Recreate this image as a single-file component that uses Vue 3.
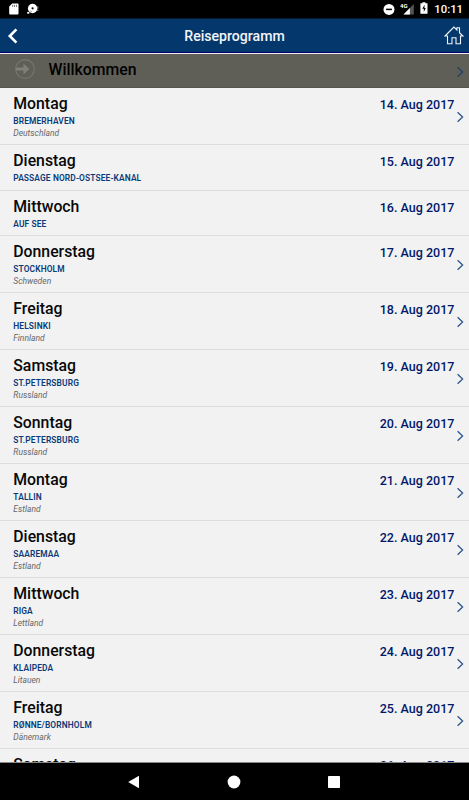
<script setup>
const tage = [
  { tag: 'Montag', ort: 'BREMERHAVEN', land: 'Deutschland', datum: '14. Aug 2017' },
  { tag: 'Dienstag', ort: 'PASSAGE NORD-OSTSEE-KANAL', datum: '15. Aug 2017' },
  { tag: 'Mittwoch', ort: 'AUF SEE', datum: '16. Aug 2017' },
  { tag: 'Donnerstag', ort: 'STOCKHOLM', land: 'Schweden', datum: '17. Aug 2017' },
  { tag: 'Freitag', ort: 'HELSINKI', land: 'Finnland', datum: '18. Aug 2017' },
  { tag: 'Samstag', ort: 'ST.PETERSBURG', land: 'Russland', datum: '19. Aug 2017' },
  { tag: 'Sonntag', ort: 'ST.PETERSBURG', land: 'Russland', datum: '20. Aug 2017' },
  { tag: 'Montag', ort: 'TALLIN', land: 'Estland', datum: '21. Aug 2017' },
  { tag: 'Dienstag', ort: 'SAAREMAA', land: 'Estland', datum: '22. Aug 2017' },
  { tag: 'Mittwoch', ort: 'RIGA', land: 'Lettland', datum: '23. Aug 2017' },
  { tag: 'Donnerstag', ort: 'KLAIPEDA', land: 'Litauen', datum: '24. Aug 2017' },
  { tag: 'Freitag', ort: 'RØNNE/BORNHOLM', land: 'Dänemark', datum: '25. Aug 2017' },
  { tag: 'Samstag', datum: '26. Aug 2017' },
]
</script>

<template>
  <div class="screen">
    <div class="statusbar">
      <svg class="sd" width="10" height="12" viewBox="0 0 10 12">
        <path d="M3.2 0.5H8.6Q9.5 0.5 9.5 1.4V10.6Q9.5 11.5 8.6 11.5H1.1Q0.2 11.5 0.2 10.6V3.6Z" fill="#fff" />
        <path d="M3.7 1.8V4M5.6 1.8V4M7.5 1.8V4" stroke="#555" stroke-width="0.8" />
      </svg>
      <svg class="sync" width="13" height="12" viewBox="0 0 13 12">
        <circle cx="5.6" cy="5.5" r="4.7" fill="#fff" />
        <circle cx="5.6" cy="5.3" r="1.1" fill="#000" />
        <path d="M0.2 9.8H2.3" stroke="#fff" stroke-width="1.8" />
        <path d="M10.8 3.4V5.6M10.8 6.6V8M3.2 7.8L5 8.8" fill="none" stroke="#aaa" stroke-width="1" />
      </svg>
      <span class="spacer"></span>
      <svg class="dnd" width="12" height="12" viewBox="0 0 12 12">
        <circle cx="6" cy="6.4" r="5.5" fill="#fff" />
        <path d="M3.1 6.4H8.9" stroke="#000" stroke-width="1.5" />
      </svg>
      <svg class="signal" width="15" height="12" viewBox="0 0 15 12">
        <path d="M3.5 11.5L13.8 1V11.5Z" fill="#555" />
        <path d="M3.5 11.5L9.9 5V11.5Z" fill="#fff" />
        <text x="0" y="5.3">4G</text>
      </svg>
      <svg class="battery" width="8" height="12" viewBox="0 0 8 12">
        <path d="M2.4 0.2H5.4V1.3H7.5V11.7H0.4V1.3H2.4Z" fill="#fff" />
        <path d="M4.6 2.8L2.3 6.8H3.8V10L5.8 5.9H4.4Z" fill="#000" />
      </svg>
      <span class="clock">10:11</span>
    </div>

    <header class="header">
      <svg class="back" width="11" height="16" viewBox="0 0 11 16">
        <path d="M9.4 1.4L2.8 8L9.4 14.6" fill="none" stroke="#fff" stroke-width="2.6" />
      </svg>
      <h1>Reiseprogramm</h1>
      <svg class="home" width="20" height="20" viewBox="0 0 20 20">
        <path
          d="M1 10L9.9 1L12.9 4V1.7H15.5V6.7L18.9 10H16.5V17.8H12V11.8H8V17.8H3.5V10Z"
          fill="none"
          stroke="#f1f3f8"
          stroke-width="1.1"
        />
      </svg>
    </header>

    <div class="welcome">
      <svg class="go" width="22" height="22" viewBox="0 0 22 22">
        <circle cx="11" cy="11" r="9.4" fill="none" stroke="#77776f" stroke-width="1.1" />
        <path d="M2 9.5H9.4V5.6L15.5 11L9.4 16.4V12.5H2Z" fill="#7f7f78" />
      </svg>
      <span class="title">Willkommen</span>
      <svg class="chevron" width="8" height="12" viewBox="0 0 8 12">
        <path d="M1.6 1.2L6.6 6L1.6 10.8" />
      </svg>
    </div>

    <ul class="list">
      <li v-for="t in tage" :key="t.datum" :class="{ small: !t.land }">
        <div class="info">
          <div class="tag">{{ t.tag }}</div>
          <div class="ort">{{ t.ort }}</div>
          <div v-if="t.land" class="land">{{ t.land }}</div>
        </div>
        <div class="datum">{{ t.datum }}</div>
        <div class="more">
          <svg v-if="t.land" class="chevron" width="8" height="12" viewBox="0 0 8 12">
            <path d="M1.6 1.2L6.6 6L1.6 10.8" />
          </svg>
        </div>
      </li>
    </ul>

    <nav class="navbar">
      <svg width="14" height="14" viewBox="0 0 14 14">
        <path d="M1.2 7L12 0.8V13.2Z" fill="#fff" />
      </svg>
      <svg width="14" height="14" viewBox="0 0 14 14">
        <circle cx="7" cy="7" r="6.4" fill="#fff" />
      </svg>
      <svg width="14" height="14" viewBox="0 0 14 14">
        <rect x="1" y="1" width="12" height="12" rx="0.8" fill="#fff" />
      </svg>
    </nav>
  </div>
</template>

<style>
body {
  background: #000;
  overflow: hidden;
}
</style>

<style scoped>
.screen {
  display: flex;
  flex-direction: column;
  width: 469px;
  height: 800px;
  overflow: hidden;
  background: #f2f2f2;
  font-family: Roboto, "Liberation Sans", sans-serif;
}

svg {
  display: block;
  flex: none;
}

.statusbar {
  display: flex;
  box-sizing: border-box;
  flex: none;
  height: 19px;
  padding: 3px 6px 0 9px;
  background: #000;
  border-bottom: 1px solid #041c35;
}

.sync {
  margin-left: 8px;
}

.spacer {
  flex: 1;
}

.signal {
  margin-left: 5px;
}

.signal text {
  fill: #fff;
  font-size: 6px;
  font-weight: 700;
}

.battery {
  margin: -1px 6px 0 5px;
}

.clock {
  color: #fff;
  font-size: 11.3px;
  font-weight: 500;
  line-height: 13px;
}

.header {
  display: flex;
  box-sizing: border-box;
  flex: none;
  align-items: center;
  height: 34px;
  padding: 0 5px 0 7px;
  background: #04386c;
  border-bottom: 1px solid #00006e;
}

.header h1 {
  flex: 1;
  margin: 0 0 0 7px;
  color: #f3f5fa;
  font-size: 14.1px;
  font-weight: 500;
  line-height: 20px;
  text-align: center;
}

.welcome {
  display: flex;
  box-sizing: border-box;
  flex: none;
  align-items: center;
  height: 35px;
  padding: 0 5px 3px 14px;
  background: #5f5f57;
  border-top: 1px solid #eee;
  border-bottom: 1px solid #55554e;
}

.welcome .title {
  flex: 1;
  margin-left: 12.5px;
  font-size: 15.8px;
  font-weight: 500;
}

.welcome .chevron {
  margin-top: 5px;
}

.chevron path {
  fill: none;
  stroke: #2c578b;
  stroke-width: 1.3;
}

.welcome .chevron path {
  stroke: #1d426c;
}

.list {
  flex: 1;
  min-height: 0;
  margin: 0;
  padding: 0;
  overflow: hidden;
  border-bottom: 1px solid #888;
  list-style: none;
}

.list li {
  display: flex;
  box-sizing: border-box;
  height: 57px;
  padding: 6px 5px 0 13.3px;
  border-bottom: 1px solid #dedede;
}

.list li.small {
  height: 45.5px;
}

.info {
  flex: 1;
}

.tag {
  color: #080808;
  font-size: 15.8px;
  font-weight: 500;
  line-height: 20px;
}

.ort {
  color: #0a3a78;
  font-size: 8.4px;
  font-weight: 600;
  letter-spacing: 0.13px;
  line-height: 14px;
}

.land {
  color: #666;
  font-size: 8.5px;
  font-style: italic;
  line-height: 10px;
}

.datum {
  color: #00186a;
  font-size: 12.5px;
  font-weight: 500;
  letter-spacing: 0.02px;
  line-height: 22px;
}

.more {
  width: 8px;
  margin-left: 1.5px;
}

.more .chevron {
  margin-top: 17px;
}

.navbar {
  display: flex;
  box-sizing: border-box;
  flex: none;
  gap: 86px;
  align-items: center;
  justify-content: center;
  height: 37px;
  padding-right: 1px;
  background: #000;
}
</style>
